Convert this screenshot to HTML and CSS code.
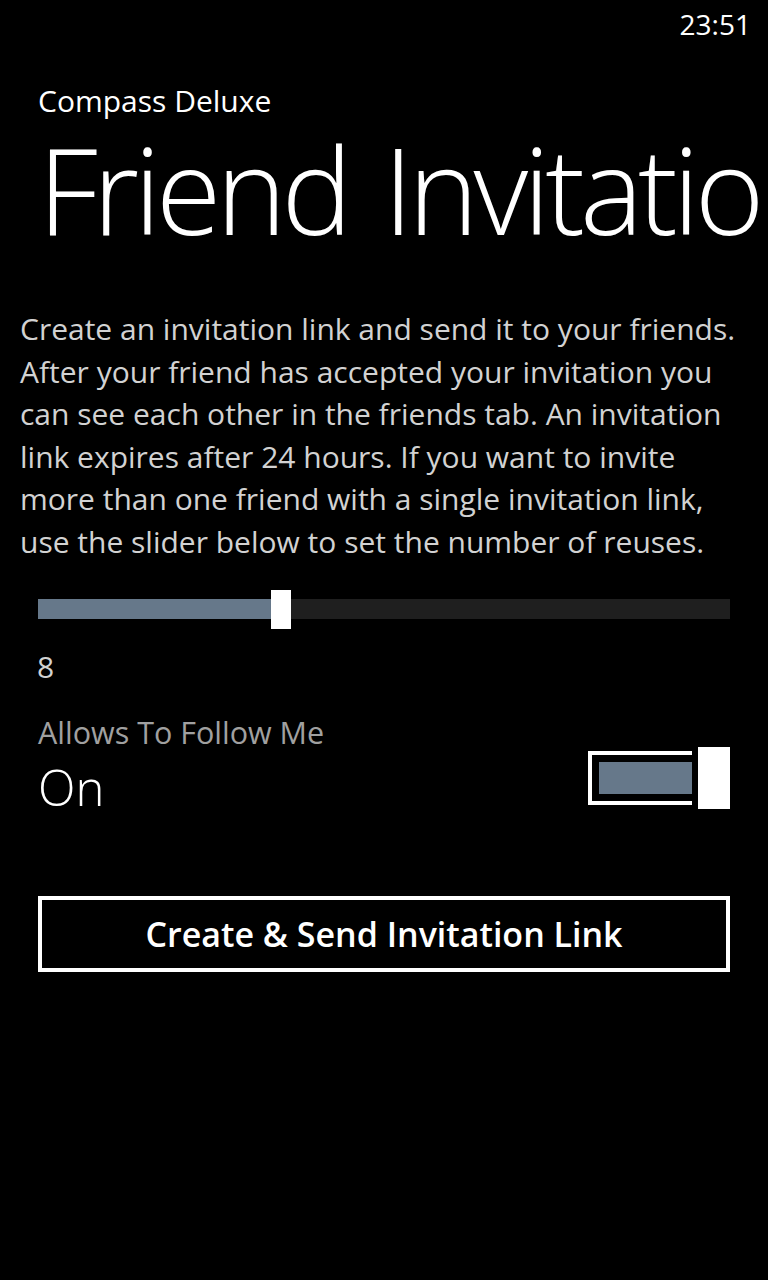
FILE: index.html
```html
<!DOCTYPE html>
<html lang="en">
<head>
<meta charset="utf-8">
<title>Friend Invitation</title>
<link rel="stylesheet" href="styles.css">
</head>
<body>
<div class="phone">
  <div class="status"><span class="time">23:51</span></div>
  <header class="header">
    <div class="app-name">Compass Deluxe</div>
    <h1 class="page-title">Friend Invitation</h1>
  </header>
  <main class="content">
    <p class="desc">Create an invitation link and send it to your friends. After your friend has accepted your invitation you can see each other in the friends tab. An invitation link expires after 24 hours. If you want to invite more than one friend with a single invitation link, use the slider below to set the number of reuses.</p>
    <div class="slider">
      <div class="slider-fill" style="width: 33.7%"></div>
      <div class="slider-thumb"></div>
      <div class="slider-rest"></div>
    </div>
    <div class="slider-value">8</div>
    <div class="toggle-block">
      <div class="toggle-label">Allows To Follow Me</div>
      <div class="toggle-row">
        <div class="toggle-state">On</div>
        <div class="toggle">
          <div class="toggle-track"><div class="toggle-fill"></div></div>
          <div class="toggle-thumb"></div>
        </div>
      </div>
    </div>
    <button class="action-btn">Create &amp; Send Invitation Link</button>
  </main>
</div>
</body>
</html>
```
FILE: styles.css
```css
html, body {
  margin: 0;
  padding: 0;
  background: #000;
}
body {
  width: 768px;
  height: 1280px;
  overflow: hidden;
  font-family: "Open Sans", "Noto Sans", sans-serif;
  color: #fff;
}
.phone {
  display: flex;
  flex-direction: column;
}
.status {
  height: 48px;
  display: flex;
  justify-content: flex-end;
  align-items: center;
  padding-right: 17px;
}
.time {
  font-size: 28px;
}
.header {
  padding-left: 38px;
  padding-top: 33px;
  overflow: hidden;
  white-space: nowrap;
}
.app-name {
  font-size: 30px;
  line-height: 40px;
}
.page-title {
  margin: 0;
  font-size: 119px;
  font-weight: 300;
  line-height: 137px;
  letter-spacing: -5px;
  word-spacing: 10px;
}
.content {
  padding: 50px 20px 0 20px;
  display: flex;
  flex-direction: column;
}
.desc {
  margin: 0;
  font-size: 30px;
  line-height: 42.5px;
  color: #d2d2d2;
}
.slider {
  margin: 26px 18px 0 18px;
  height: 40px;
  display: flex;
  align-items: center;
}
.slider-fill {
  height: 20px;
  background: #66788a;
}
.slider-thumb {
  width: 20px;
  height: 39px;
  background: #fff;
  flex: none;
}
.slider-rest {
  flex: 1;
  height: 20px;
  background: #1f1f1f;
}
.slider-value {
  margin: 18px 0 0 17px;
  font-size: 30px;
  line-height: 40px;
  color: #d2d2d2;
}
.toggle-block {
  margin: 25px 18px 0 18px;
}
.toggle-label {
  font-size: 30.5px;
  line-height: 40px;
  color: #a0a0a0;
}
.toggle-row {
  display: flex;
  justify-content: space-between;
  align-items: flex-start;
  margin-top: -5px;
}
.toggle-state {
  margin-top: 10px;
  font-size: 49px;
  font-weight: 300;
  line-height: 60px;
}
.toggle {
  display: flex;
  align-items: center;
  gap: 6px;
}
.toggle-track {
  box-sizing: border-box;
  width: 104px;
  height: 54px;
  border: 4px solid #fff;
  border-right: none;
  display: flex;
  align-items: center;
  padding-left: 7px;
}
.toggle-fill {
  width: 93px;
  height: 32px;
  background: #66788a;
}
.toggle-thumb {
  width: 32px;
  height: 62px;
  background: #fff;
}
.action-btn {
  margin: 79px 18px 0 18px;
  height: 76px;
  background: #000;
  border: 4px solid #fff;
  color: #fff;
  font-family: "Open Sans", "Noto Sans", sans-serif;
  font-size: 34px;
  font-weight: 600;
}
```
